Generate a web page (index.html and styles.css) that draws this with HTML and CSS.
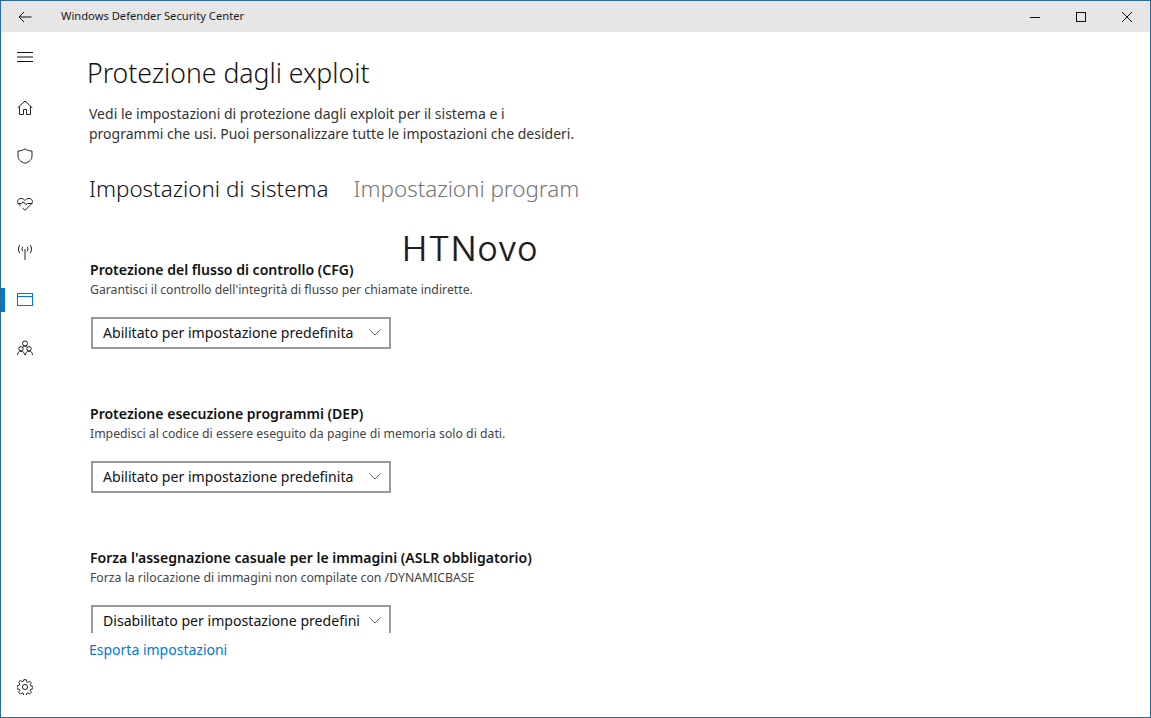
FILE: index.html
```html
<!DOCTYPE html>
<html lang="it">
<head>
    <meta charset="UTF-8">
    <title>Windows Defender Security Center</title>
    <link rel="stylesheet" href="styles.css">
</head>
<body>
    <div class="window">
        <!-- Title bar -->
        <div class="titlebar">
            <div class="backBtn">
                <svg width="14" height="12" viewBox="0 0 14 12" fill="none" stroke="#111" stroke-width="1"><path d="M13.500 6H1M6 1 1 6l5 5"/></svg>
            </div>
            <span class="appTitle">Windows Defender Security Center</span>
            <div class="winControls">
                <div class="winBtn"><svg width="12" height="12" viewBox="0 0 12 12" fill="none" stroke="#111"><path d="M1 6.500h10"/></svg></div>
                <div class="winBtn"><svg width="12" height="12" viewBox="0 0 12 12" fill="none" stroke="#111"><rect x="1.500" y="1.500" width="9" height="9"/></svg></div>
                <div class="winBtn"><svg width="12" height="12" viewBox="0 0 12 12" fill="none" stroke="#111"><path d="M1 1l10 10M11 1 1 11"/></svg></div>
            </div>
        </div>

        <div class="body">
            <!-- Side nav -->
            <nav class="sidenav">
                <div class="navItem menuItem">
                    <svg width="16" height="10" viewBox="0 0 16 10" fill="none" stroke="#111"><path d="M0 .5h16M0 5h16M0 9.500h16"/></svg>
                </div>
                <div class="navItem">
                    <svg width="16" height="16" viewBox="0 0 16 16" fill="none" stroke="#222"><path d="M.7 7.800 8 1l7.300 6.800M2.500 6.500v8h4v-5h3v5h4v-8"/></svg>
                </div>
                <div class="navItem">
                    <svg width="16" height="16" viewBox="0 0 16 16" fill="none" stroke="#222"><path d="M8 .8c2 1.500 4.300 2.200 7 2.200v5c0 3.300-2.500 5.900-7 7.300-4.500-1.400-7-4-7-7.300V3c2.700 0 5-.7 7-2.200z"/></svg>
                </div>
                <div class="navItem">
                    <svg width="16" height="16" viewBox="0 0 16 16" fill="none" stroke="#222"><path d="M3.800 10.200 1.500 7.800C-.3 5.800.6 2.500 4 2.500c1.800 0 3 .9 4 2 1-1.100 2.200-2 4-2 3.400 0 4.300 3.300 2.500 5.300L8 14.300 5.500 11.800"/><path d="M.8 7.500h4l1.400-1.800 2.600 3 1.500-1.200h5"/></svg>
                </div>
                <div class="navItem">
                    <svg width="16" height="16" viewBox="0 0 16 16" fill="none" stroke="#222"><path d="M8 5v11M5.800 2.800c-1 1.400-1 3.200 0 4.600M10.200 2.800c1 1.400 1 3.200 0 4.600M2.800 1C1 3.400 1 6.800 2.800 9.200M13.200 1c1.800 2.400 1.800 5.800 0 8.200"/></svg>
                </div>
                <div class="navItem selected">
                    <svg width="16" height="14" viewBox="0 0 16 14" fill="none" stroke="#0078d7"><rect x=".5" y=".5" width="15" height="12"/><path d="M.5 3.500h15"/></svg>
                </div>
                <div class="navItem">
                    <svg width="16" height="16" viewBox="0 0 16 16" fill="none" stroke="#222"><circle cx="8" cy="3.500" r="2.500"/><circle cx="4" cy="8.800" r="2.200"/><circle cx="12" cy="8.800" r="2.200"/><path d="M.5 15c0-2.400 1.400-3.800 3.500-3.800S7.500 12.600 7.500 15M8.500 15c0-2.400 1.400-3.800 3.500-3.800s3.500 1.400 3.500 3.800M5.500 7.200c.8-.8 1.600-1.200 2.500-1.200s1.700.4 2.500 1.200"/></svg>
                </div>
                <div class="navSpacer"></div>
                <div class="navItem gearItem">
                    <svg width="16" height="16" viewBox="0 0 16 16" fill="none" stroke="#222"><path d="M6.800.7h2.400l.4 2.100 1.300.6 1.800-1.200 1.700 1.700-1.200 1.800.6 1.300 2.100.4v2.400l-2.100.4-.6 1.300 1.200 1.800-1.700 1.700-1.800-1.200-1.300.6-.4 2.100H6.800l-.4-2.100-1.300-.6-1.800 1.200-1.700-1.700 1.200-1.800-.6-1.300-2.100-.4V6.700l2.100-.4.6-1.300-1.200-1.800 1.700-1.700 1.800 1.200 1.300-.6z"/><circle cx="8" cy="8" r="2.600"/></svg>
                </div>
            </nav>

            <!-- Page -->
            <main class="page">
                <div class="scrollArea">
                    <h1 class="pageTitle">Protezione dagli exploit</h1>
                    <p class="intro">Vedi le impostazioni di protezione dagli exploit per il sistema e i<br>programmi che usi. Puoi personalizzare tutte le impostazioni che desideri.</p>
                    <div class="tabs">
                        <span class="tab active">Impostazioni di sistema</span>
                        <span class="tab">Impostazioni program</span>
                    </div>

                    <section class="setting first">
                        <h3>Protezione del flusso di controllo (CFG)</h3>
                        <p>Garantisci il controllo dell'integrità di flusso per chiamate indirette.</p>
                        <div class="combo">
                            <span>Abilitato per impostazione predefinita</span>
                            <svg width="12" height="7" viewBox="0 0 12 7" fill="none" stroke="#666"><path d="M.5.500 6 6 11.500.5"/></svg>
                        </div>
                    </section>

                    <section class="setting">
                        <h3>Protezione esecuzione programmi (DEP)</h3>
                        <p>Impedisci al codice di essere eseguito da pagine di memoria solo di dati.</p>
                        <div class="combo">
                            <span>Abilitato per impostazione predefinita</span>
                            <svg width="12" height="7" viewBox="0 0 12 7" fill="none" stroke="#666"><path d="M.5.500 6 6 11.500.5"/></svg>
                        </div>
                    </section>

                    <section class="setting">
                        <h3>Forza l'assegnazione casuale per le immagini (ASLR obbligatorio)</h3>
                        <p>Forza la rilocazione di immagini non compilate con /DYNAMICBASE</p>
                        <div class="combo">
                            <span>Disabilitato per impostazione predefini</span>
                            <svg width="12" height="7" viewBox="0 0 12 7" fill="none" stroke="#666"><path d="M.5.500 6 6 11.500.5"/></svg>
                        </div>
                    </section>
                </div>
                <a class="exportLink">Esporta impostazioni</a>
            </main>
        </div>

        <div class="watermark">HTNovo</div>
    </div>
</body>
</html>
```

FILE: styles.css
```css
* {
    margin: 0;
    padding: 0;
    box-sizing: border-box;
}
body {
    font-family: "Noto Sans", "Open Sans", Arial, sans-serif;
    color: #111;
    background-color: white;
}
.window {
    position: relative;
    width: 1151px;
    height: 718px;
    border: 1px solid #2b6a99;
    display: flex;
    flex-direction: column;
    overflow: hidden;
}

/* title bar */
.titlebar {
    height: 31px;
    flex: none;
    background-color: #e6e6e6;
    display: flex;
    align-items: center;
}
.backBtn {
    width: 48px;
    display: flex;
    justify-content: center;
}
.appTitle {
    margin-left: 12px;
    padding-bottom: 2px;
    font-size: 11.2px;
    color: #1a1a1a;
}
.winControls {
    margin-left: auto;
    display: flex;
}
.winBtn {
    width: 46px;
    height: 31px;
    display: flex;
    align-items: center;
    justify-content: center;
}

/* side nav */
.body {
    flex: 1;
    display: flex;
    min-height: 0;
}
.sidenav {
    width: 47px;
    flex: none;
    display: flex;
    flex-direction: column;
}
.navItem {
    height: 48px;
    flex: none;
    display: flex;
    align-items: center;
    justify-content: center;
    padding-left: 1px;
}
.menuItem {
    margin-bottom: 4px;
    padding-top: 2px;
}
.selected {
    position: relative;
}
.selected::before {
    content: "";
    position: absolute;
    left: 0;
    top: 12px;
    bottom: 12px;
    width: 4px;
    background-color: #0078d7;
}
.navSpacer {
    flex: 1;
}
.gearItem {
    margin-bottom: 6px;
}

/* page */
.page {
    flex: 1;
    min-width: 0;
    padding-left: 39px;
}
.scrollArea {
    height: 601px;
    overflow: hidden;
}
.pageTitle {
    font-size: 26.6px;
    font-weight: 300;
    line-height: 36px;
    margin-top: 23px;
    color: #111;
}
.intro {
    font-size: 14px;
    line-height: 20px;
    margin-top: 13px;
    margin-left: 2px;
    color: #333;
}
.tabs {
    display: flex;
    gap: 25px;
    margin-top: 29px;
    margin-left: 2px;
}
.tab {
    font-size: 22.4px;
    font-weight: 300;
    line-height: 32px;
    color: #767676;
}
.tab.active {
    color: #111;
}
.setting {
    margin-left: 3px;
    margin-top: 55px;
}
.setting h3 {
    font-size: 14.05px;
    font-weight: 600;
    line-height: 20px;
}
.setting p {
    font-size: 12.25px;
    line-height: 20px;
    color: #444;
}
.combo {
    width: 300px;
    height: 32px;
    margin-top: 17px;
    margin-left: 1px;
    border: 2px solid #999;
    display: flex;
    align-items: center;
    justify-content: space-between;
    padding: 0 8px 1px 10px;
    font-size: 14.1px;
    color: #111;
    white-space: nowrap;
}
.exportLink {
    display: block;
    margin-top: 7px;
    margin-left: 2px;
    font-size: 14px;
    line-height: 20px;
    color: #0078d7;
}

/* watermark over the page */
.watermark {
    position: absolute;
    left: 401px;
    top: 226px;
    font-family: Inter, "DejaVu Sans", sans-serif;
    font-size: 34px;
    font-weight: 300;
    letter-spacing: 1px;
    line-height: 44px;
    color: #1c1c1c;
    text-shadow: 0.5px 0 rgba(220, 120, 0, 0.5), -0.5px 0 rgba(0, 110, 200, 0.5);
}
```
